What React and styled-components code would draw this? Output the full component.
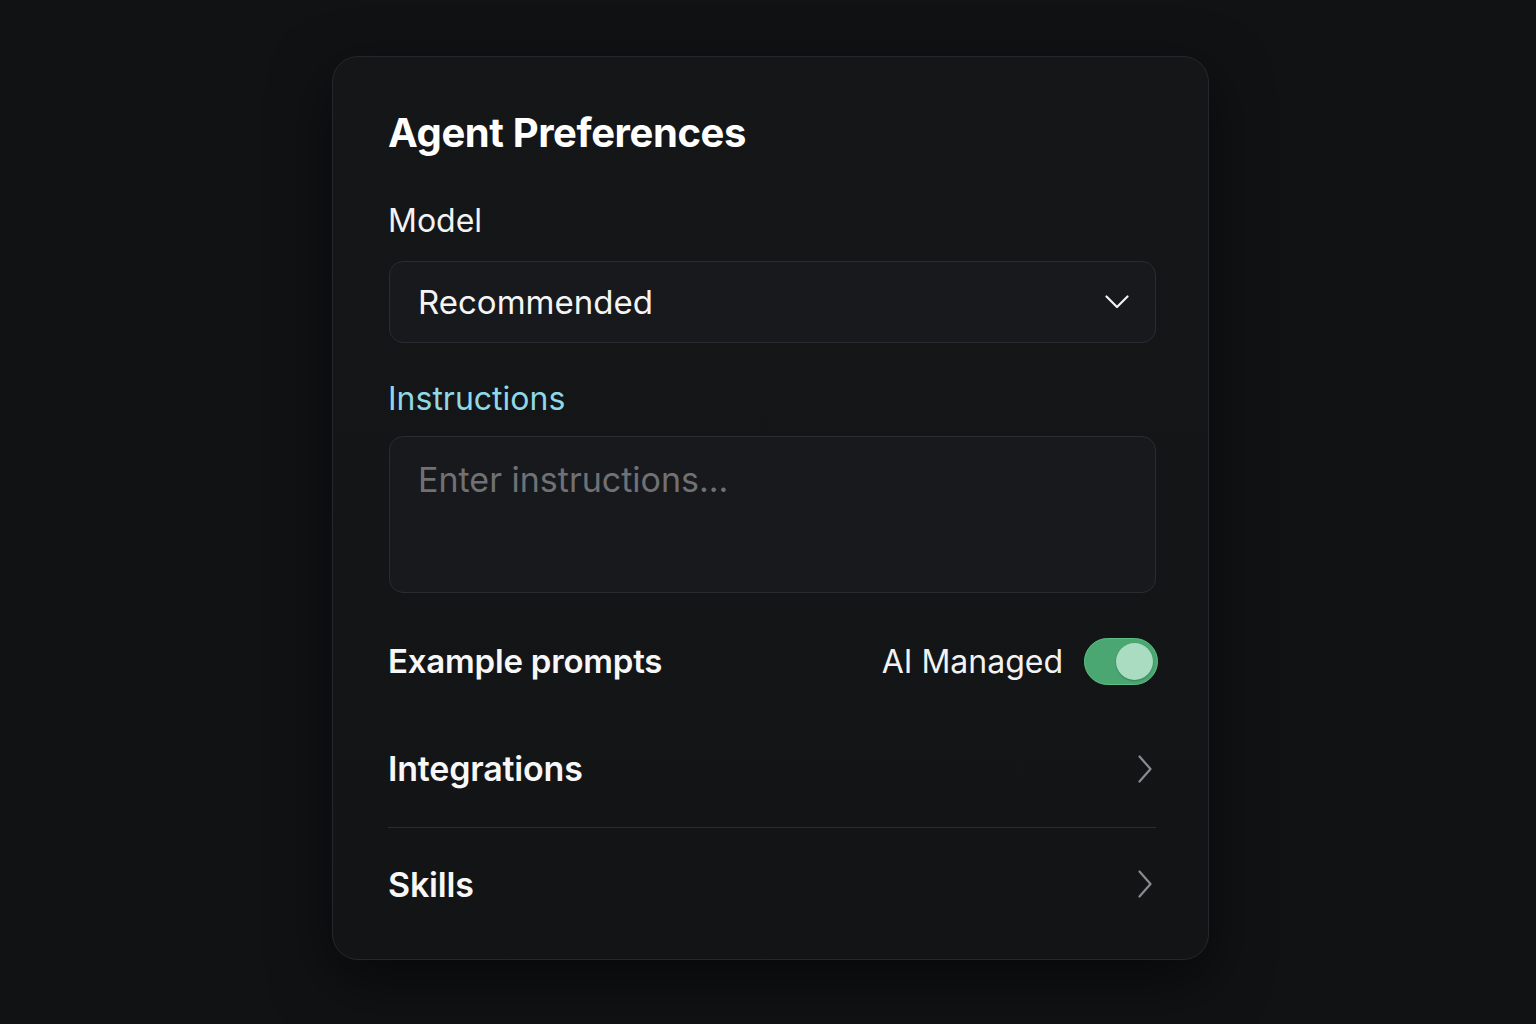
import React from "react";
import styled, { createGlobalStyle } from "styled-components";

const Global = createGlobalStyle`
  html, body { margin: 0; padding: 0; background: #111214; }
  body { font-family: Inter, "Noto Sans", sans-serif; -webkit-font-smoothing: antialiased; }
  #root { min-height: 1024px; }
`;

const Page = styled.div`
  min-height: 1024px;
  display: flex;
  justify-content: center;
  align-items: flex-start;
  padding-top: 56px;
  box-sizing: border-box;
  background: #111214;
`;

const Card = styled.div`
  width: 877px;
  height: 904px;
  box-sizing: border-box;
  margin-left: 5px;
  background: linear-gradient(180deg, #151618 0%, #131416 100%);
  border: 1px solid #26272a;
  border-radius: 26px;
  box-shadow: 0 20px 60px rgba(0, 0, 0, 0.55);
  padding: 48px 52px 0 55px;
  display: flex;
  flex-direction: column;
`;

const Title = styled.h1`
  margin: 0;
  font-size: 40px;
  line-height: 56px;
  font-weight: 700;
  color: #ffffff;
  letter-spacing: -0.4px;
`;

const Label = styled.div`
  font-size: 32px;
  line-height: 40px;
  font-weight: 400;
  color: ${(p) => p.$color || "#f2f2f3"};
  margin-top: ${(p) => p.$mt}px;
`;

const Field = styled.div`
  margin-top: ${(p) => p.$mt}px;
  margin-left: 1px;
  height: ${(p) => p.$h}px;
  box-sizing: border-box;
  border: 1px solid #2b2c30;
  border-radius: 14px;
  background: #18191c;
  display: flex;
  align-items: ${(p) => (p.$top ? "flex-start" : "center")};
  justify-content: space-between;
  padding: ${(p) => (p.$top ? "21px 28px 0 28px" : "0 26px 0 28px")};
`;

const FieldText = styled.span`
  font-size: ${(p) => (p.$muted ? 34 : 33)}px;
  line-height: 44px;
  color: ${(p) => (p.$muted ? "#707175" : "#f4f4f5")};
`;

const Row = styled.div`
  display: flex;
  align-items: center;
  justify-content: space-between;
  height: ${(p) => p.$h}px;
  margin-top: ${(p) => p.$mt || 0}px;
  border-bottom: ${(p) => (p.$divider ? "1px solid #2a2b2e" : "none")};
`;

const RowTitle = styled.span`
  font-size: ${(p) => p.$size || 34}px;
  font-weight: 600;
  color: #f7f7f8;
  letter-spacing: -0.2px;
`;

const RightGroup = styled.div`
  display: flex;
  align-items: center;
  gap: 21px;
  margin-right: -2px;
`;

const RightText = styled.span`
  font-size: 32px;
  color: #f2f2f3;
`;

const Toggle = styled.div`
  width: 74px;
  height: 47px;
  box-sizing: border-box;
  border-radius: 24px;
  background: #4aa772;
  border: 1px solid #5cbf86;
  display: flex;
  align-items: center;
  justify-content: flex-end;
  padding-right: 4px;
`;

const Knob = styled.div`
  width: 37px;
  height: 37px;
  border-radius: 50%;
  background: #a9dcc1;
  box-shadow: 0 1px 2px rgba(0, 0, 0, 0.25);
`;

const ChevronWrap = styled.span`
  display: flex;
  margin-right: 4px;
`;

const Chevron = ({ dir }) =>
  dir === "down" ? (
    <svg width="24" height="14" viewBox="0 0 24 14" fill="none">
      <path d="M1.5 1.5 L12 12 L22.5 1.5" stroke="#f2f2f3" strokeWidth="2.2" strokeLinecap="round" strokeLinejoin="round" />
    </svg>
  ) : (
    <ChevronWrap>
      <svg width="14" height="28" viewBox="0 0 14 28" fill="none">
        <path d="M1.5 1.5 L12.5 14 L1.5 26.5" stroke="#8a8b8f" strokeWidth="2.2" strokeLinecap="round" strokeLinejoin="round" />
      </svg>
    </ChevronWrap>
  );

export default function App() {
  return (
    <>
      <Global />
      <Page>
        <Card>
          <Title>Agent Preferences</Title>
          <Label $mt={40}>Model</Label>
          <Field $mt={20} $h={82}>
            <FieldText>Recommended</FieldText>
            <Chevron dir="down" />
          </Field>
          <Label $mt={36} $color="#8fd8e6">Instructions</Label>
          <Field $mt={17} $h={157} $top>
            <FieldText $muted>Enter instructions...</FieldText>
          </Field>
          <Row $mt={19} $h={98}>
            <RowTitle $size={33}>Example prompts</RowTitle>
            <RightGroup>
              <RightText>AI Managed</RightText>
              <Toggle>
                <Knob />
              </Toggle>
            </RightGroup>
          </Row>
          <Row $h={117} $divider>
            <RowTitle>Integrations</RowTitle>
            <Chevron dir="right" />
          </Row>
          <Row $h={112}>
            <RowTitle>Skills</RowTitle>
            <Chevron dir="right" />
          </Row>
        </Card>
      </Page>
    </>
  );
}
